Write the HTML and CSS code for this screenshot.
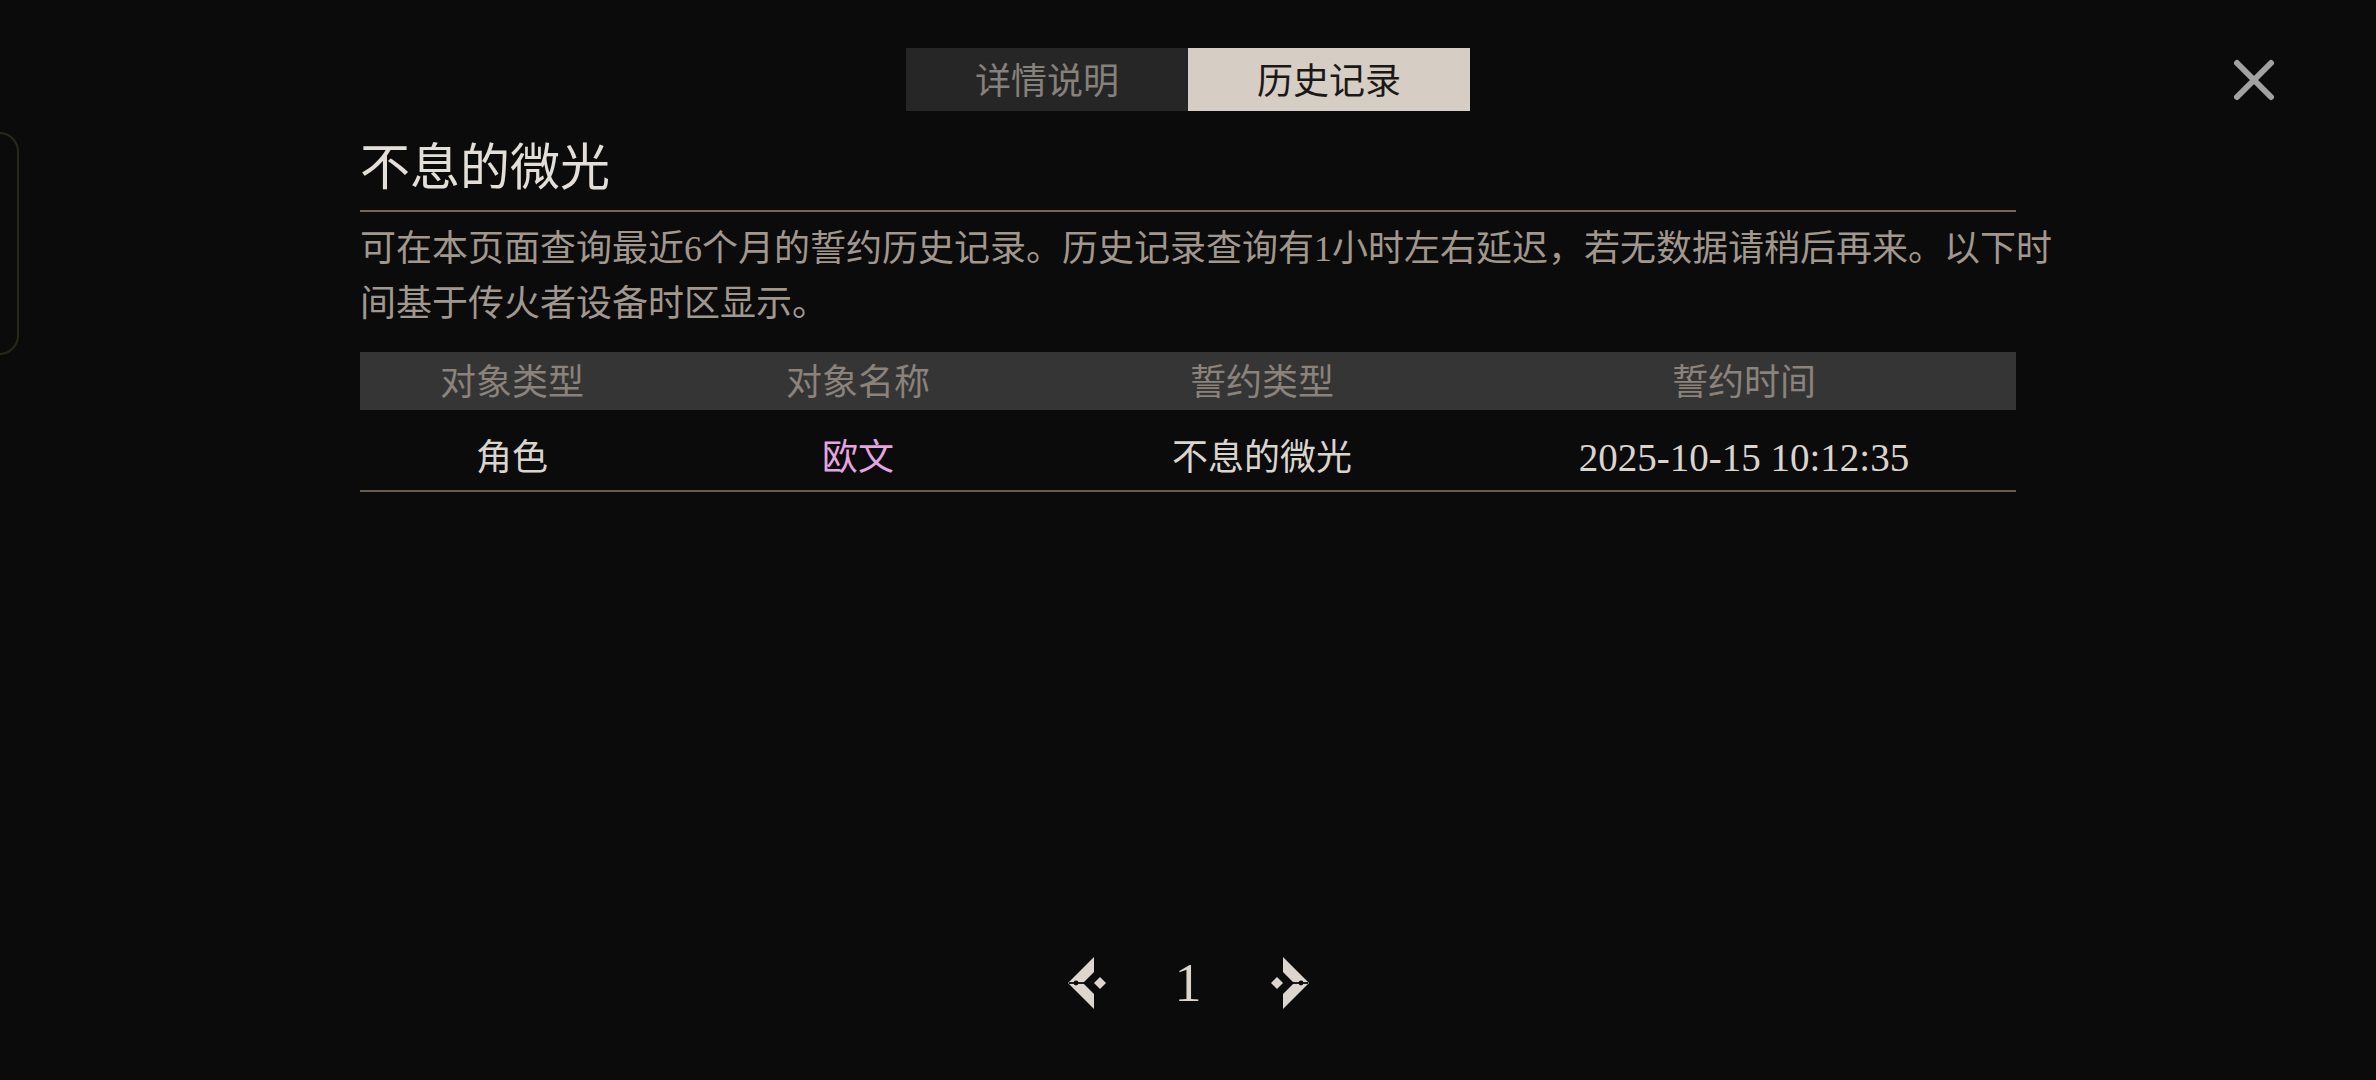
FILE: index.html
```html
<!DOCTYPE html>
<html lang="zh-CN">
<head>
<meta charset="utf-8">
<title>历史记录</title>
<link rel="stylesheet" href="styles.css">
</head>
<body>
  <div class="side-tab"></div>

  <button class="close" aria-label="关闭">
    <svg viewBox="0 0 44 44" width="44" height="44">
      <path d="M5 5 L39 39 M39 5 L5 39" stroke="#a2a2a2" stroke-width="6" stroke-linecap="round" fill="none"/>
    </svg>
  </button>

  <nav class="tabs">
    <div class="tab">详情说明</div>
    <div class="tab active">历史记录</div>
  </nav>

  <main class="panel">
    <h1 class="title">不息的微光</h1>
    <p class="desc">可在本页面查询最近6个月的誓约历史记录。历史记录查询有1小时左右延迟，若无数据请稍后再来。以下时间基于传火者设备时区显示。</p>

    <div class="table">
      <div class="thead">
        <div>对象类型</div>
        <div>对象名称</div>
        <div>誓约类型</div>
        <div>誓约时间</div>
      </div>
      <div class="row">
        <div>角色</div>
        <div class="name">欧文</div>
        <div>不息的微光</div>
        <div class="date">2025-10-15 10:12:35</div>
      </div>
      <div class="list"></div>
    </div>

    <div class="pager">
      <svg class="arrow" viewBox="0 0 38 52" width="38" height="52">
        <polygon points="26,0 0,26 26,52 26,37 15,26 26,15" fill="#ddd6cf"/>
        <polygon points="32,20 38,26 32,32 26,26" fill="#ddd6cf"/>
        <line x1="1" y1="26" x2="26" y2="26" stroke="#0b0b0b" stroke-width="1.8"/>
        <circle cx="8" cy="26" r="2.4" fill="#0b0b0b"/>
      </svg>
      <span class="page-num">1</span>
      <svg class="arrow next" viewBox="0 0 38 52" width="38" height="52">
        <polygon points="26,0 0,26 26,52 26,37 15,26 26,15" fill="#ddd6cf"/>
        <polygon points="32,20 38,26 32,32 26,26" fill="#ddd6cf"/>
        <line x1="1" y1="26" x2="26" y2="26" stroke="#0b0b0b" stroke-width="1.8"/>
        <circle cx="8" cy="26" r="2.4" fill="#0b0b0b"/>
      </svg>
    </div>
  </main>
</body>
</html>
```

FILE: styles.css
```css
html, body {
  margin: 0;
  padding: 0;
}

body {
  position: relative;
  width: 2376px;
  height: 1080px;
  overflow: hidden;
  background: #0b0b0b;
  font-family: "Liberation Serif", "Noto Sans CJK SC", serif;
}

/* half-hidden drawer handle on the left edge */
.side-tab {
  position: absolute;
  left: -20px;
  top: 132px;
  width: 39px;
  height: 223px;
  box-sizing: border-box;
  border: 2px solid #262a1c;
  border-radius: 22px;
}

.close {
  position: absolute;
  top: 58px;
  left: 2232px;
  width: 44px;
  height: 44px;
  padding: 0;
  border: 0;
  background: none;
}

.close svg {
  display: block;
}

/* tab switcher */
.tabs {
  display: flex;
  justify-content: center;
  padding-top: 48px;
}

.tab {
  width: 282px;
  height: 63px;
  box-sizing: border-box;
  padding-top: 4px;
  display: flex;
  align-items: center;
  justify-content: center;
  font-size: 36px;
  line-height: 1;
  background: #262626;
  color: #87817b;
}

.tab.active {
  background: #d6cdc4;
  color: #1b1917;
}

/* main panel */
.panel {
  width: 1656px;
  margin: 27px auto 0;
}

.title {
  margin: 0;
  padding-bottom: 12px;
  font-size: 50px;
  font-weight: 400;
  line-height: 60px;
  color: #e4ded8;
  border-bottom: 2px solid #75685a;
}

.desc {
  width: 1700px;
  margin: 10px 0 0;
  font-size: 36px;
  line-height: 55px;
  color: #a0978f;
}

.table {
  margin-top: 20px;
}

.thead,
.row {
  display: grid;
  grid-template-columns: 304px 388px 420px 544px;
  align-items: center;
  text-align: center;
  font-size: 36px;
  line-height: 1;
  box-sizing: border-box;
}

.thead {
  height: 58px;
  padding-top: 3px;
  background: #353535;
  color: #8a827b;
}

.row {
  height: 82px;
  padding-top: 15px;
  border-bottom: 2px solid #655c51;
  color: #dad4ce;
}

.row .name {
  color: #e3a4e0;
}

.row .date {
  font-size: 39px;
}

.list {
  height: 465px;
}

/* pagination */
.pager {
  display: flex;
  justify-content: center;
  align-items: center;
  gap: 69px;
  height: 52px;
}

.arrow {
  display: block;
}

.arrow.next {
  transform: scaleX(-1);
}

.page-num {
  width: 27px;
  text-align: center;
  font-size: 54px;
  line-height: 52px;
  color: #dcd5ce;
}
```
